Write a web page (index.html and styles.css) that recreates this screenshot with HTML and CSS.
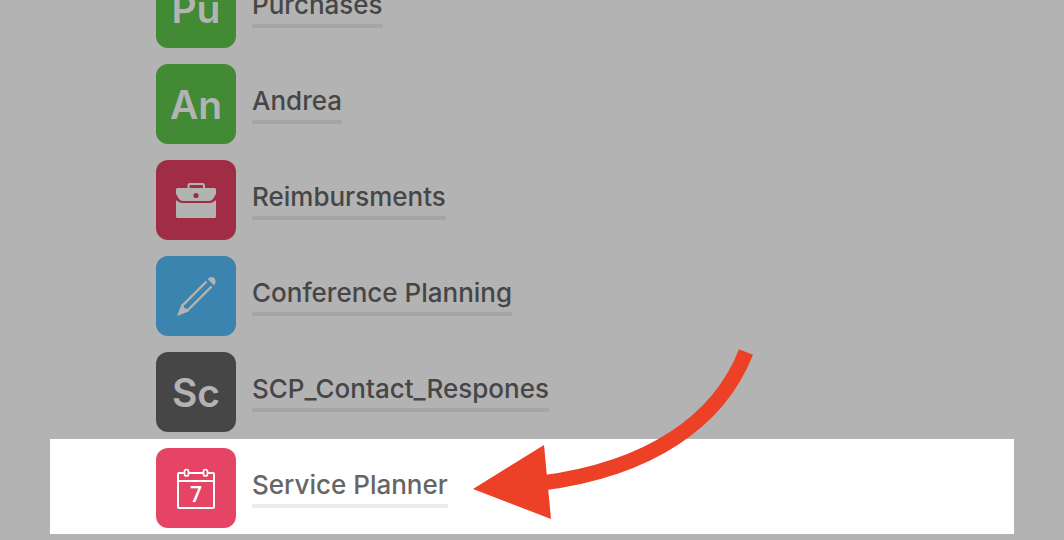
FILE: index.html
```html
<!DOCTYPE html>
<html lang="en">
<head>
<meta charset="utf-8">
<title>Workspaces</title>
<link rel="stylesheet" href="styles.css">
</head>
<body>
<main class="page">
  <ul class="list">
    <li class="row">
      <span class="tile green">Pu</span>
      <a class="label" href="#purchases">Purchases</a>
    </li>
    <li class="row">
      <span class="tile green">An</span>
      <a class="label" href="#andrea">Andrea</a>
    </li>
    <li class="row">
      <span class="tile red">
        <svg class="icon" viewBox="0 0 80 80" aria-hidden="true">
          <path d="M32.500 29V25.500q0-1.500 1.500-1.500H46.500q1.500 0 1.500 1.500V29" fill="none" stroke="currentColor" stroke-width="2"/>
          <path d="M21.500 28H58.500Q60 28 60 29.500V34L57 39Q55.500 41 53 41H27Q24.500 41 23 39L20 34V29.500Q20 28 21.500 28Z" fill="currentColor"/>
          <path d="M20 40Q22.500 43 26 43H54Q57.500 43 60 40V56.500Q60 58 58.500 58H21.500Q20 58 20 56.500Z" fill="currentColor"/>
          <circle class="clasp" cx="40" cy="35.500" r="2.600"/>
        </svg>
      </span>
      <a class="label" href="#reimbursments">Reimbursments</a>
    </li>
    <li class="row">
      <span class="tile blue">
        <svg class="icon" viewBox="0 0 80 80" aria-hidden="true">
          <path d="M50.500 25.500L26.500 49.500L24 57L31.500 54.500L55.500 30.500" fill="none" stroke="currentColor" stroke-width="2.400"/>
          <path d="M25.500 48.500Q28 49 28 52Q31.500 52 32.500 55.500L21 60Z" fill="currentColor"/>
          <path d="M51.500 23Q55.500 19.500 58.500 22.500Q61 25.500 58 29.500Z" fill="currentColor"/>
        </svg>
      </span>
      <a class="label" href="#conference">Conference Planning</a>
    </li>
    <li class="row">
      <span class="tile dark">Sc</span>
      <a class="label" href="#scp">SCP_Contact_Respones</a>
    </li>
    <li class="row active">
      <span class="tile pink">
        <svg class="icon" viewBox="0 0 80 80" aria-hidden="true">
          <g fill="none" stroke="currentColor" stroke-width="2">
            <path d="M28 25H23Q22 25 22 26V59Q22 60 23 60H57Q58 60 58 59V26Q58 25 57 25H52M33 25H47M22 33H58"/>
            <rect x="28.500" y="21.500" width="4" height="6.500" rx="2" stroke-width="1.700"/>
            <rect x="47.500" y="21.500" width="4" height="6.500" rx="2" stroke-width="1.700"/>
          </g>
          <text class="day" x="40" y="54" text-anchor="middle">7</text>
        </svg>
      </span>
      <a class="label" href="#service">Service Planner</a>
    </li>
  </ul>
  <svg class="arrow" viewBox="0 0 284 172" aria-hidden="true">
    <path d="M276 4C249 73 180 121 72 135" fill="none" stroke="currentColor" stroke-width="15"/>
    <path d="M3 141L74 97L81 171Z" fill="currentColor"/>
  </svg>
</main>
</body>
</html>
```
FILE: styles.css
```css
* {
  box-sizing: border-box;
}

body {
  margin: 0;
  background: #b3b3b3;
  color: #464646;
  font-family: Inter, "Liberation Sans", sans-serif;
  overflow: hidden;
}

.page {
  position: relative;
  padding: 0 50px;
}

/* The list is scrolled part of the way through its first row. */
.list {
  list-style: none;
  margin: -40px 0 0;
  padding: 0;
}

.row {
  display: flex;
  align-items: center;
  gap: 16px;
  padding: 8px 106px;
}

.active {
  margin-top: -1px;
  padding-top: 9px;
  padding-bottom: 6px;
  background: #fff;
  color: #666;
}

.tile {
  display: flex;
  align-items: center;
  justify-content: center;
  flex: none;
  width: 80px;
  height: 80px;
  border-radius: 12px;
  color: #b3b3b3;
  font-size: 39px;
  font-weight: 600;
  line-height: 48px;
}

.green,
.dark {
  padding-top: 2px;
}

.green {
  background: #428a34;
}

.red {
  background: #a02d45;
}

.blue {
  background: #3b84af;
}

.dark {
  background: #464646;
}

.pink {
  background: #e64465;
  color: #fff;
}

.icon {
  display: block;
  width: 80px;
  height: 80px;
}

.clasp {
  fill: #a02d45;
}

.day {
  fill: currentColor;
  font-family: "Open Sans", sans-serif;
  font-size: 21px;
  font-weight: 600;
}

.label {
  padding-bottom: 2px;
  border-bottom: 4px solid #a6a6a6;
  color: inherit;
  font-size: 26px;
  font-weight: 500;
  line-height: 34px;
  text-decoration: none;
  white-space: nowrap;
}

.active .label {
  border-color: #ececec;
}

.arrow {
  position: absolute;
  left: 470px;
  bottom: 14px;
  width: 284px;
  height: 172px;
  color: #ec4126;
}
```
